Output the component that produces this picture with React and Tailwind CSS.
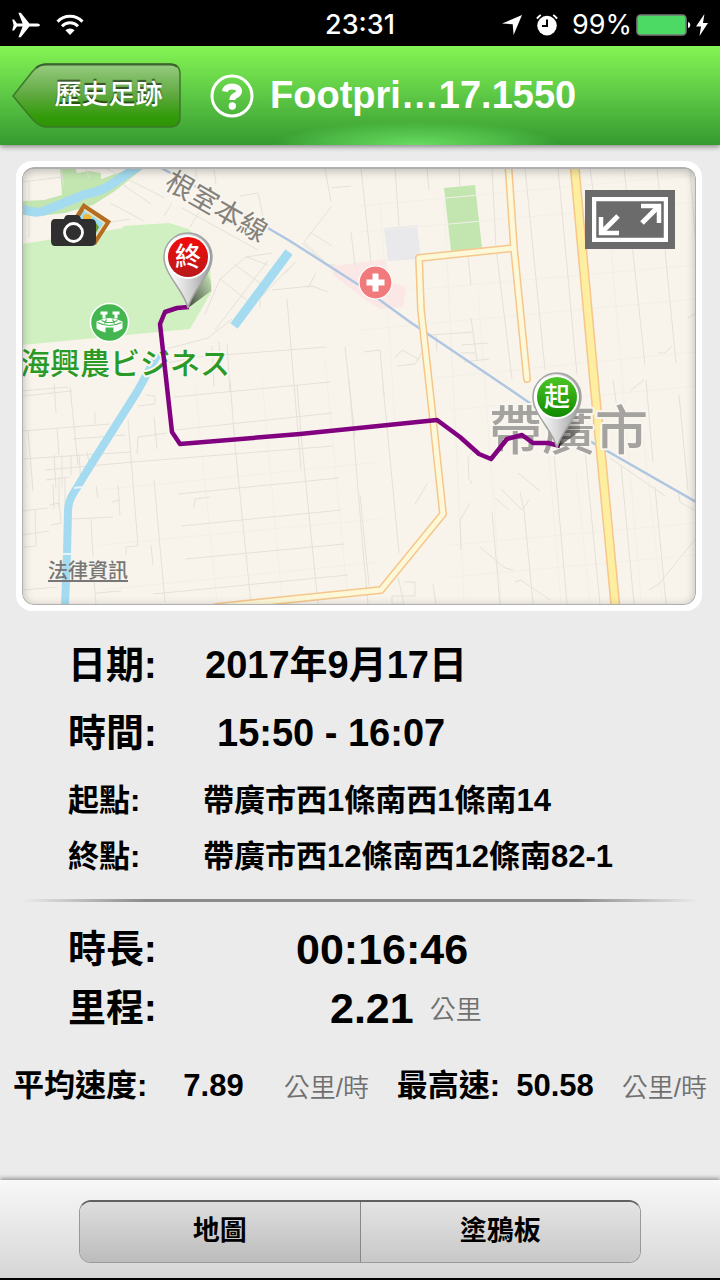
import React, { useState } from "react";

const routePoints =
  "189,307 177,308 165,312 160,324 164,360 172,432 180,444 300,434 437,420 460,437 479,454 491,459 507,439 522,435 533,443 548,443 560,446";

const minorRoads = [
  // north west blocks
  "M29 182 v22 M29 210 l0 28 M61 168 l3 18 M86 168 l3 10 M22 182 l40 -5",
  "M105 168 l60 30 M119 182 l32 22 M110 203 l34 18 M172 203 l-8 13 M190 227 l10 -16",
  "M196 168 v12 M214 170 l2 14 M182 208 l76 42 M100 224 l30 -5 M240 196 l18 -3 6 28",
  "M325 168 l6 34 M331 188 l20 -2 M331 207 l-27 35 25 24 M310 232 l22 14 M335 265 h-9 l-24 -22",
  "M351 232 l4 34 M205 314 l15 -35 26 -22 26 -4 M220 279 l28 22 M234 264 l30 22 M246 257 l22 8",
  "M215 330 l53 -69 M260 308 v-10 l28 -29 M272 290 l40 -4 16 6 M308 288 l8 -15 M295 262 l-10 12",
  "M166 349 l42 -11 24 -19 M167 363 l30 -6 129 -10 M212 346 l2 40 M219 342 l1 20 M227 344 l3 48",
  "M287 299 l14 170 M345 347 l10 90 M22 396 l50 -5 M54 383 l2 30 M70 387 l8 78",
  // south west blocks
  "M22 391 l46 -4 M22 431 l88 -7 M57 428 l2 27 M73 439 l52 -4 M95 412 v12",
  "M22 459 l108 -7 M28 431 l5 60 M45 470 l88 -8 200 -16 M54 455 l2 34 M62 455 v32 M71 455 v20 M79 454 l2 30 M87 452 l4 20",
  "M46 480 l23 -3 M53 484 l1 25 M59 478 v30 M65 478 v30 M22 511 l26 -3 M35 510 l1 36 -12 1 M22 535 l27 -4",
  "M50 505 l9 -2 2 20 -10 2 M72 519 l41 -2 M91 519 l2 38 M96 486 l2 12 M118 485 l2 30 M120 500 l-8 2",
  "M128 420 l10 126 -12 1 v8 M138 437 l29 -4 M138 437 l-1 17 M154 417 l3 32 M146 395 l9 1 v8 l-17 2",
  "M154 480 l11 122 M151 545 l2 20 M22 590 l35 -3 M93 568 l3 36 M96 593 l25 -2",
  // long parallels in the middle
  "M174 397 l156 -15 M175 430 l157 -17 M178 494 l161 -16 M194 508 l1 -9 15 -2 M182 526 l159 -16 M185 559 l159 -15 M153 594 l195 -19",
  "M230 380 l5 65 16 159 M297 385 l5 60 16 159 M349 380 l14 170 5 54",
  "M361 168 l10 94 M395 168 l4 58 M427 168 l2 22 M459 168 l1 18 M383 385 l16 168 M360 495 l9 90 M468 257 l3 28 M415 504 l12 -20",
  // south east streets
  "M492 168 l4 80 16 131 M525 168 l20 202 M558 168 l19 207 M590 168 l4 30 M624 168 l21 197 M657 168 l19 195 M690 168 l6 80",
  "M554 455 l13 149 M585 450 l15 154 M621 465 l13 139 M655 487 l11 117 M613 380 l7 50 M646 380 l7 82 M679 395 l9 95",
  "M492 512 l8 92 M524 510 l-4 -18 M524 510 l9 94 M461 550 l-1 -30 10 -17 M501 489 l21 21 7 -10 M518 473 l22 18 M495 498 l14 12",
  "M480 547 l25 21 8 2 M515 582 l6 -2 29 20 M398 577 l6 27 -12 0 v-8 h12 M404 582 h11 v14 h-11 M433 584 l3 20",
  "M430 335 l43 -3 M436 335 l1 16 M471 318 l6 43 M462 345 l26 -2 M461 353 h15 M464 362 l25 -3 M395 358 l7 -8 16 9 6 -10 M397 366 l18 -2 4 -6",
  "M364 352 l16 -2 4 45 M658 353 l7 0 7 -7 M630 391 l14 -11 M688 318 l8 -5 M610 458 l55 38 M697 537 l-38 47 -10 6 M678 490 l2 12 16 9 M469 480 l-1 -22 6 -8 M470 480 l2 4",
];

const faintRoads = [
  "M360 206 l335 -31 M360 232 l335 -30 M410 290 l285 -25 M360 330 l335 -31 M435 378 l260 -26 M450 410 l245 -24 M450 545 l245 -22 M450 577 l245 -22",
  "M380 200 l15 220 M444 200 l20 400 M478 290 l23 310 M543 385 l18 219 M576 470 l14 134 M607 200 l34 400 M640 410 l22 190",
  "M100 590 l280 -28 M100 545 l280 -26 M100 490 l280 -28 M262 380 l20 220 M325 360 l23 240 M195 385 l22 218",
];

const Airplane = () => (
  <svg viewBox="0 0 28 26" className="h-[26px] w-7" fill="#fff" aria-hidden="true">
    <path d="M28 13c0 1-1.6 1.6-3.4 1.6h-7.2L8.8 25.2H6.4l4.2-10.6H5L2 18.4H.2L1.6 13 .2 7.6H2l3 3.8h5.6L6.4.8h2.4l8.6 10.6h7.2c1.8 0 3.4.6 3.4 1.6z" />
  </svg>
);

const Wifi = () => (
  <svg viewBox="0 0 28 22" className="h-[22px] w-7" aria-hidden="true">
    <g fill="none" stroke="#fff" strokeWidth="3">
      <path d="M1.5 7.6a17.5 17.5 0 0 1 25 0" />
      <path d="M6 12.2a11.2 11.2 0 0 1 16 0" />
    </g>
    <path d="M14 21l4.6-4.7a6.5 6.5 0 0 0-9.2 0z" fill="#fff" />
  </svg>
);

const StatusBar = () => (
  <div className="grid h-[46px] grid-cols-3 items-center bg-black px-3 pt-1 font-[Inter,sans-serif] text-[27px] text-white">
    <div className="flex items-center gap-4">
      <Airplane />
      <Wifi />
    </div>
    <time className="text-center font-medium">23:31</time>
    <div className="flex items-center justify-end">
      <svg viewBox="0 0 20 20" className="h-5 w-5 shrink-0" fill="#fff" aria-hidden="true">
        <path d="M20 0L11.6 20l-.9-10.7L0 8.6z" />
      </svg>
      <svg viewBox="0 0 22 22" className="ml-3.5 h-[22px] w-[22px] shrink-0" aria-hidden="true">
        <circle cx="11" cy="11.6" r="9.8" fill="#fff" />
        <path d="M1 4.6A12 12 0 0 1 4.8 1M17.2 1A12 12 0 0 1 21 4.6" stroke="#fff" strokeWidth="2" fill="none" />
        <path d="M11 5.5v6.6H6" stroke="#000" strokeWidth="2" fill="none" />
      </svg>
      <span className="ml-3.5">99%</span>
      <svg viewBox="0 0 56 22" className="ml-1 h-[22px] w-14 shrink-0" aria-hidden="true">
        <rect x="1" y="1" width="49" height="20" rx="3.5" fill="#4cd964" stroke="#777" strokeWidth="1.6" />
        <path d="M52 8c3 .5 3 5.5 0 6z" fill="#fff" />
      </svg>
      <svg viewBox="0 0 12 22" className="ml-1 h-[22px] w-3 shrink-0" fill="#fff" aria-hidden="true">
        <path d="M8.4 0L0 12.5h5L3.5 22 12 9H7z" />
      </svg>
    </div>
  </div>
);

const Header = () => (
  <header className="relative flex h-[99px] items-center bg-linear-to-b from-[#84f553] via-[#5cc845] to-[#359a30] pl-3 shadow-[0_2px_5px_rgba(0,0,0,0.4)]">
    <div className="absolute inset-x-0 bottom-0 mx-auto h-6 w-72 translate-x-14 bg-[radial-gradient(ellipse_at_bottom,#68dc60_0%,#5acb5499_45%,transparent_70%)]" />
    <button type="button" className="relative h-[66px] w-[169px] shrink-0 text-[27px] font-medium text-white">
      <svg viewBox="0 0 169 66" className="absolute inset-0 h-full w-full" aria-hidden="true">
        <defs>
          <linearGradient id="back-fill" x1="0" y1="0" x2="0" y2="1">
            <stop offset="0" stopColor="#98cc82" />
            <stop offset="0.5" stopColor="#5ea83e" />
            <stop offset="0.85" stopColor="#319a08" />
            <stop offset="1" stopColor="#2f9206" />
          </linearGradient>
        </defs>
        <path
          d="M1 33L20 9Q27 1 34 1H158Q168 1 168 11V54Q168 64 158 64H34Q28 64 21 57Z"
          fill="url(#back-fill)"
          stroke="#3c7a2a"
          strokeWidth="1.5"
        />
        <path d="M24 5Q28 1.500 34 1.500H158Q163 1.500 165 4" fill="none" stroke="#3c6130" strokeWidth="2" />
      </svg>
      <span className="relative block pl-6 [text-shadow:0_-2px_1px_rgba(0,0,0,0.55)]">歷史足跡</span>
    </button>
    <div className="relative flex items-center pl-[29px]">
      <button type="button" aria-label="Help" className="h-11 w-11 shrink-0">
        <svg viewBox="0 0 44 44" className="h-full w-full" fill="none" stroke="#fff">
          <circle cx="22" cy="22" r="20" strokeWidth="3" />
          <path d="M15 17.5c.5-3.500 3.300-5 7-5 4.300 0 7 1.900 7 4.700 0 2.300-1.500 3.300-3.700 4.300-2.200 1-3 1.700-3 4.500" strokeWidth="6" />
          <circle cx="22.300" cy="32" r="3.700" fill="#fff" stroke="none" />
        </svg>
      </button>
      <h1 className="ml-4 text-[38px] font-bold text-white">Footpri…17.1550</h1>
    </div>
  </header>
);

const Pin = ({ x, y, label, fill }) => (
  <g transform={`translate(${x} ${y})`}>
    <path d="M0 51L23 34Q24 22 17 12L4 30Z" fill="url(#pin-shade)" />
    <path
      d="M0 51C-4 33-24 18-24 0A24 24 0 0 1 24 0C24 18 4 33 0 51Z"
      fill="url(#pin-body)"
      stroke="#a3a3a3"
      strokeWidth="1.500"
    />
    <circle r="22" fill="#fff" />
    <circle r="20" fill={fill} />
    <text y="9" textAnchor="middle" fontSize="26" fontWeight="500" fill="#fff">
      {label}
    </text>
  </g>
);

const MapDrawing = () => (
  <svg viewBox="22 167 674 438" className="block h-auto w-full" role="img" aria-label="帶廣市">
    <defs>
      <linearGradient id="pin-body" x1="0" y1="0" x2="1" y2="0">
        <stop offset="0.1" stopColor="#fff" />
        <stop offset="0.5" stopColor="#d8d8d8" />
        <stop offset="1" stopColor="#989898" />
      </linearGradient>
      <linearGradient id="pin-shade" x1="0" y1="1" x2="1" y2="0">
        <stop offset="0" stopColor="#000" stopOpacity="0.7" />
        <stop offset="1" stopColor="#000" stopOpacity="0" />
      </linearGradient>
      <linearGradient id="pin-red" x1="0" y1="0" x2="0" y2="1">
        <stop offset="0" stopColor="#f40a0a" />
        <stop offset="1" stopColor="#b81a1a" />
      </linearGradient>
      <linearGradient id="pin-green" x1="0" y1="0" x2="0" y2="1">
        <stop offset="0" stopColor="#4cc624" />
        <stop offset="1" stopColor="#108a00" />
      </linearGradient>
    </defs>
    <rect x="22" y="167" width="674" height="438" fill="#f8f4ec" />

    {/* Parks and blocks */}
    <path d="M60 167h15l2 6 12-2 12 2v6l34-12h10l-30 24-22 14-28 8-26 3-17-1v-14l22-1 18-5z" fill="#c3e6b1" />
    <path d="M22 244l101-16v-2l46-3 20 6 20 26 3 36-22 38-168 16z" fill="#d1f0c1" />
    <path d="M444 188l31-3 7 63-31 3z" fill="#c3e6b1" />
    <path d="M384 228l33-3 4 34-33 2z" fill="#e9e9ec" />
    <path d="M332 266l54-7 2 22 18 6-3 20-22 2-14-8-34-26z" fill="#fbe8e6" />

    <g fill="none" stroke="#f2efe8" strokeWidth="1">
      {faintRoads.map((d) => (
        <path key={d} d={d} />
      ))}
    </g>
    <g fill="none" stroke="#e3e1d9" strokeWidth="1">
      {minorRoads.map((d) => (
        <path key={d} d={d} />
      ))}
    </g>

    {/* Water */}
    <g fill="none" stroke="#a5dbf0" strokeLinejoin="round">
      <path d="M22 209q12 5 22 2l42-17q14-2 26-10l28-19" strokeWidth="9" />
      <path d="M289 252L234 326" strokeWidth="9" />
      <path d="M158 354L137 392L92 463L73 494Q68 502 68 512L67 553L65 606" strokeWidth="8" />
    </g>
    <path d="M74 488l8-1M63 554h9" stroke="#e8f5f8" strokeWidth="2" />

    {/* Railway */}
    <path d="M150 162L210 194L290 241L362 287L410 322L505 386L560 424L696 502" fill="none" stroke="#afc6e2" strokeWidth="2.400" />

    {/* Main roads */}
    <g fill="none" strokeLinejoin="round">
      <g stroke="#f6c68c" strokeLinecap="round">
        <path d="M508 160L514 248L527 379" strokeWidth="8" />
        <path d="M514 248L419 258L421 310L432 410L443 514L381 590L216 607" strokeWidth="8" />
        <path d="M574 160L594 380L616 612" strokeWidth="10" />
      </g>
      <g stroke="#fdf9d8" strokeLinecap="round">
        <path d="M508 160L514 248L527 379" strokeWidth="5" />
        <path d="M514 248L419 258L421 310L432 410L443 514L381 590L216 607" strokeWidth="5" />
      </g>
      <path d="M574 160L594 380L616 612" strokeWidth="7" stroke="#fdeea0" />
    </g>

    {/* Labels */}
    <g stroke="#f9f6ef" strokeWidth="4" strokeLinejoin="round" paintOrder="stroke">
      <text transform="translate(163 187) rotate(30)" fontSize="28" fill="#85827c">
        根室本線
      </text>
      <text x="20" y="374" fontSize="30" fontWeight="500" fill="#2a9a27">
        海興農ビジネス
      </text>
      <text x="489" y="450" fontSize="53" fontWeight="500" fill="#a5a39f">
        帶廣市
      </text>
    </g>

    {/* Places */}
    <g transform="translate(109.500 322.500)">
      <circle r="19" fill="#43b64f" stroke="#fff" strokeWidth="1.500" />
      <path d="M-9-11h7v3h-2v4h-3v-4h-2zM3-11h7v3H8v4H5v-4H3z" fill="#fff" />
      <path d="M-13-1Q0-8 13-1V6Q9 9 4 10V5H-4V10Q-9 9-13 6Z" fill="#fff" />
      <path d="M-12 0Q0 6 12 0M-8-2Q0 2 8-2M-5 1l2-4M5 1l-2-4" fill="none" stroke="#43b64f" strokeWidth="1.200" />
    </g>
    <g transform="translate(375.500 282.500)">
      <circle r="16.500" fill="#f17a7c" stroke="#fff" strokeWidth="1.200" />
      <path d="M-9 0H9M0-9V9" stroke="#fff" strokeWidth="6" />
    </g>

    <polyline points={routePoints} fill="none" stroke="#800080" strokeWidth="4.500" strokeLinejoin="round" />
    <Pin x={557} y={397} label="起" fill="url(#pin-green)" />
    <Pin x={188} y={257} label="終" fill="url(#pin-red)" />
  </svg>
);

const MapCard = () => (
  <section className="relative mt-4 mr-[18px] ml-4 overflow-hidden rounded-2xl border-[6px] border-white bg-white">
    <div className="relative overflow-hidden rounded-xl">
      <MapDrawing />
      <div className="pointer-events-none absolute inset-0 rounded-xl border border-t-2 border-[#b0b0b0] shadow-[inset_0_2px_10px_rgba(0,0,0,0.25)]" />
    </div>

    <button type="button" aria-label="Photos" className="absolute top-9 left-7 h-[45px] w-[62px]">
      <svg viewBox="0 0 62 45" className="h-full w-full">
        <path d="M34 3L58 19L45 39L20 25Z" fill="#9adcf5" stroke="#b56d22" strokeWidth="4.500" />
        <path d="M34 6.500L54.500 20L44 35.500" fill="none" stroke="#f3dfb0" strokeWidth="1.500" />
        <path d="M46 20l3 4-6 11-10-7z" fill="#6f9b2c" />
        <circle cx="37" cy="15" r="4" fill="#f4b62c" />
        <path d="M5 16h9q1-4 4-4h9q3 0 4 4h10q5 0 5 5v17q0 5-5 5H5q-4 0-4-5V21q0-5 4-5z" fill="#2f2f2f" />
        <circle cx="23.500" cy="29.500" r="9" fill="#2f2f2f" stroke="#fff" strokeWidth="2.800" />
      </svg>
    </button>

    <button type="button" aria-label="Full screen" className="absolute top-[23px] right-[21px] h-[59px] w-[90px] bg-[#6b6b6b] p-[7px]">
      <svg viewBox="0 0 76 45" className="h-full w-full" fill="none" stroke="#fff">
        <rect x="2" y="2" width="72" height="41" strokeWidth="4.500" />
        <path d="M26 19L11 34" strokeWidth="5" />
        <path d="M9 20V36H27" strokeWidth="4.500" />
        <path d="M50 26L65 11" strokeWidth="5" />
        <path d="M49 9H67V26" strokeWidth="4.500" />
      </svg>
    </button>

    <a href="#legal" className="absolute bottom-5 left-[26px] text-xl font-medium text-[#777] underline underline-offset-2">
      法律資訊
    </a>
  </section>
);

const Unit = ({ children }) => <span className="pt-1 text-[26px] font-[350] text-[#707070]">{children}</span>;

const Details = () => (
  <>
    <dl className="mt-5 px-[68px] font-bold text-black">
      <div className="flex h-[68px] items-center text-[38px]">
        <dt className="w-[137px]">日期:</dt>
        <dd>2017年9月17日</dd>
      </div>
      <div className="flex h-[68px] items-center text-[38px]">
        <dt className="w-[137px]">時間:</dt>
        <dd className="pl-3">15:50 - 16:07</dd>
      </div>
      <div className="mt-1.5 flex h-14 items-center text-[31px]">
        <dt className="w-[135px]">起點:</dt>
        <dd className="whitespace-nowrap">帶廣市西1條南西1條南14</dd>
      </div>
      <div className="flex h-14 items-center text-[31px]">
        <dt className="w-[135px]">終點:</dt>
        <dd className="whitespace-nowrap">帶廣市西12條南西12條南82-1</dd>
      </div>
    </dl>

    <hr className="mx-[22px] mt-3.5 h-[3px] border-0 bg-[linear-gradient(to_right,transparent,#8c8c8c_18%,#8c8c8c_82%,transparent)]" />

    <dl className="mt-[18px] px-[68px] font-bold text-black">
      <div className="flex h-[59px] items-center">
        <dt className="w-[228px] text-[38px]">時長:</dt>
        <dd className="text-[43px]">00:16:46</dd>
      </div>
      <div className="flex h-[59px] items-center">
        <dt className="w-[262px] text-[38px]">里程:</dt>
        <dd className="flex items-center gap-4 text-[43px]">
          2.21 <Unit>公里</Unit>
        </dd>
      </div>
    </dl>

    <dl className="mt-5 flex h-14 items-center justify-between px-[13px] text-[31px] font-bold whitespace-nowrap text-black">
      <div className="flex items-center">
        <dt>平均速度:</dt>
        <dd className="ml-9 flex items-center gap-10">
          7.89 <Unit>公里/時</Unit>
        </dd>
      </div>
      <div className="flex items-center">
        <dt>最高速:</dt>
        <dd className="ml-4 flex items-center gap-7">
          50.58 <Unit>公里/時</Unit>
        </dd>
      </div>
    </dl>
  </>
);

const ViewSwitch = () => {
  const [view, setView] = useState("map");
  const views = [
    { id: "map", label: "地圖" },
    { id: "board", label: "塗鴉板" },
  ];

  return (
    <footer className="border-b-2 border-black bg-linear-to-b from-[#f8f8f8] to-[#d6d6d6] px-[79px] pt-5 pb-[15px] shadow-[0_-2px_4px_rgba(0,0,0,0.35)]">
      <div className="flex h-[63px] overflow-hidden rounded-xl border border-t-2 border-[#999] border-t-[#606060]">
        {views.map((v) => (
          <button
            key={v.id}
            type="button"
            aria-pressed={view === v.id}
            onClick={() => setView(v.id)}
            className={`flex-1 border-l border-[#888] bg-linear-to-b pb-0.5 text-[27px] font-bold text-black first:border-l-0 ${
              view === v.id ? "from-[#dedede] to-[#bcbcbc]" : "from-[#e4e4e4] to-[#c8c8c8]"
            }`}
          >
            {v.label}
          </button>
        ))}
      </div>
    </footer>
  );
};

export default function App() {
  return (
    <div className="flex min-h-screen flex-col bg-[#ebebeb] font-['Liberation_Sans','Noto_Sans_CJK_TC',sans-serif]">
      <StatusBar />
      <Header />
      <main className="flex-1">
        <MapCard />
        <Details />
      </main>
      <ViewSwitch />
    </div>
  );
}
